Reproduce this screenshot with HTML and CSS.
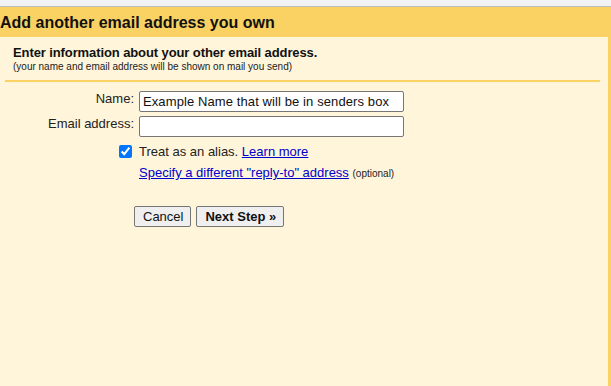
FILE: index.html
```html
<!DOCTYPE html>
<html lang="en">
<head>
    <meta charset="UTF-8">
    <title>Add another email address you own</title>
    <link rel="stylesheet" href="styles.css">
</head>
<body>
    <div class="topbar"></div>
    <div class="header">Add another email address you own</div>
    <div class="panel">
        <div class="intro">
            <div class="intro-title">Enter information about your other email address.</div>
            <div class="intro-sub">(your name and email address will be shown on mail you send)</div>
        </div>
        <form class="form">
            <div class="row">
                <label class="label" for="name">Name:</label>
                <input class="field" type="text" id="name" value="Example Name that will be in senders box">
            </div>
            <div class="row">
                <label class="label" for="email">Email address:</label>
                <input class="field" type="text" id="email">
            </div>
            <div class="row check-row">
                <span class="label"><input class="check" type="checkbox" id="alias" checked></span>
                <span><label for="alias">Treat as an alias.</label> <a href="#">Learn more</a></span>
            </div>
            <div class="row link-row">
                <span class="label"></span>
                <span><a href="#">Specify a different "reply-to" address</a> <span class="small">(optional)</span></span>
            </div>
            <div class="buttons">
                <button type="button" class="btn">Cancel</button>
                <button type="button" class="btn btn-bold">Next Step &raquo;</button>
            </div>
        </form>
    </div>
</body>
</html>
```

FILE: styles.css
```css
html, body {
    height: 100%;
}

body {
    font-family: "Liberation Sans", Arial, sans-serif;
    font-size: 13px;
    color: #222;
    margin: 0;
    padding: 0;
    display: flex;
    flex-direction: column;
    background-color: #fff7d7;
}

.topbar {
    height: 6px;
    background-color: #f1f2f4;
    border-bottom: 1px solid #bdbdbd;
}

.header {
    background-color: #fad163;
    height: 30px;
    line-height: 31px;
    font-size: 16px;
    font-weight: bold;
    color: #111;
}

.panel {
    flex: 1;
    background-color: #fff5da;
    border-right: 3px solid #fad163;
}

.intro {
    margin: 0 8px 0 5px;
    padding: 8px 0 8px 8px;
    border-bottom: 2px solid #fad163;
}

.intro-title {
    font-weight: bold;
    font-size: 13px;
    letter-spacing: -0.1px;
    color: #111;
}

.intro-sub {
    font-size: 10px;
    color: #222;
    margin-top: 1px;
}

.form {
    padding-top: 9px;
}

.row {
    display: flex;
    align-items: flex-start;
    margin-bottom: 4px;
}

.label {
    width: 139px;
    text-align: right;
    padding-right: 5px;
    box-sizing: border-box;
    line-height: 16px;
}

.field {
    width: 265px;
    height: 21px;
    box-sizing: border-box;
    margin: 0;
    padding: 1px 3px;
    border: 1px solid #767676;
    border-radius: 2px;
    background: #fff;
    font-family: "Liberation Sans", Arial, sans-serif;
    font-size: 13px;
    letter-spacing: 0.1px;
    color: #111;
}

.check-row {
    margin-top: 2px;
    line-height: 22px;
    margin-bottom: 0;
}

.check-row .label {
    line-height: 22px;
    padding-right: 7px;
}

.check {
    margin: 0;
    width: 13px;
    height: 13px;
    vertical-align: -2px;
    accent-color: #0075ff;
}

.link-row {
    line-height: 20px;
}

a {
    color: #0000cc;
}

.small {
    font-size: 10px;
}

.buttons {
    display: flex;
    gap: 5px;
    padding-left: 134px;
    margin-top: 22px;
}

.btn {
    height: 21px;
    margin: 0;
    padding: 0 7px 0 8px;
    font-family: "Liberation Sans", Arial, sans-serif;
    font-size: 13px;
    color: #111;
    background-color: #efefef;
    border: 1px solid #767676;
    border-radius: 2px;
}

.btn-bold {
    font-weight: bold;
}
```
